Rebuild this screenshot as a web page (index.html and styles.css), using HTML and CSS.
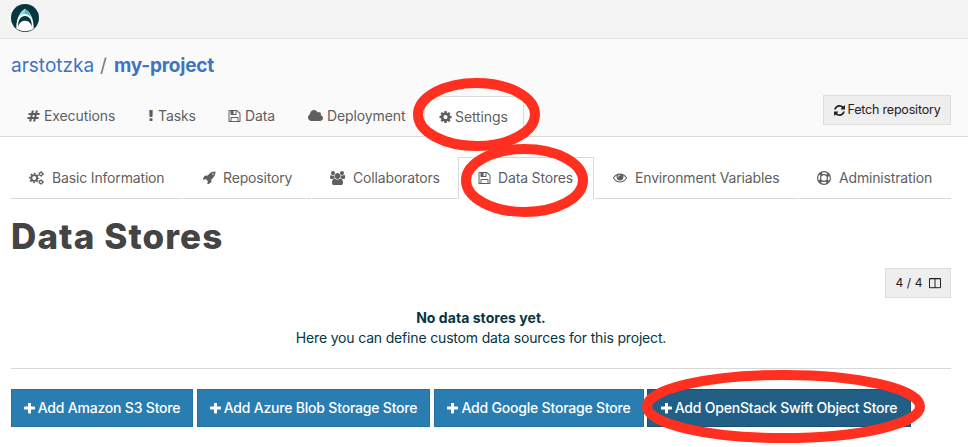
FILE: index.html
```html
<!DOCTYPE html>
<html lang="en">
<head>
<meta charset="utf-8">
<title>Data Stores</title>
<link rel="stylesheet" href="styles.css">
</head>
<body>
<svg class="sprite" aria-hidden="true">
  <symbol id="hash" viewBox="0 0 1792 1792"><path d="M991 1024l64-256h-254l-64 256h254zm768-504l-56 224q-7 24-31 24h-327l-64 256h311q15 0 25 12 10 14 6 28l-56 224q-5 24-31 24h-327l-81 328q-7 24-31 24h-224q-16 0-26-12-9-12-6-28l78-312h-254l-81 328q-7 24-31 24h-225q-15 0-25-12-9-12-6-28l78-312h-311q-15 0-25-12-9-12-6-28l56-224q7-24 31-24h327l64-256h-311q-15 0-25-12-10-14-6-28l56-224q5-24 31-24h327l81-328q7-24 32-24h224q15 0 25 12 9 12 6 28l-78 312h254l81-328q7-24 32-24h224q15 0 25 12 9 12 6 28l-78 312h311q15 0 25 12 9 12 6 28z"/></symbol>
  <symbol id="bang" viewBox="0 0 640 1792"><path d="M448 1248v224q0 26-19 45t-45 19h-256q-26 0-45-19t-19-45v-224q0-26 19-45t45-19h256q26 0 45 19t19 45zm30-1056l-28 768q-1 26-20.500 45t-45.500 19h-256q-26 0-45.500-19t-20.500-45l-28-768q-1-26 17.500-45t44.500-19h320q26 0 44.500 19t17.500 45z"/></symbol>
  <symbol id="floppy" viewBox="128 0 1536 1792"><path d="M512 1536h768v-384h-768v384zm896 0h128v-896q0-14-10-38.500t-20-34.500l-281-281q-10-10-34-20t-39-10v416q0 40-28 68t-68 28h-576q-40 0-68-28t-28-68v-416h-128v1280h128v-416q0-40 28-68t68-28h832q40 0 68 28t28 68v416zm-384-928v-320q0-13-9.500-22.500t-22.500-9.500h-192q-13 0-22.500 9.500t-9.500 22.500v320q0 13 9.500 22.500t22.500 9.500h192q13 0 22.500-9.500t9.500-22.500zm640 32v928q0 40-28 68t-68 28h-1344q-40 0-68-28t-28-68v-1344q0-40 28-68t68-28h928q40 0 88 20t76 48l280 280q28 28 48 76t20 88z"/></symbol>
  <symbol id="cloud" viewBox="64 0 1920 1792"><path d="M1984 1152q0 159-112.500 271.500t-271.500 112.500h-1088q-185 0-316.500-131.500t-131.500-316.500q0-132 71-241.500t187-163.500q-2-28-2-43 0-212 150-362t362-150q158 0 286.500 88t187.500 230q70-62 166-62 106 0 181 75t75 181q0 75-41 138 129 30 213 134.500t84 239.500z"/></symbol>
  <symbol id="cog" viewBox="128 0 1536 1792"><path d="M1152 896q0-106-75-181t-181-75-181 75-75 181 75 181 181 75 181-75 75-181zm512-109v222q0 12-8 23t-20 13l-185 28q-19 54-39 91 35 50 107 138 10 12 10 25t-9 23q-27 37-99 108t-94 71q-12 0-26-9l-138-108q-44 23-91 38-16 136-29 186-7 28-36 28h-222q-14 0-24.500-8.500t-11.500-21.500l-28-184q-49-16-90-37l-141 107q-10 9-25 9-14 0-25-11-126-114-165-168-7-10-7-23 0-12 8-23 15-21 51-66.500t54-70.500q-27-50-41-99l-183-27q-13-2-21-12.500t-8-23.500v-222q0-12 8-23t19-13l186-28q14-46 39-92-40-57-107-138-10-12-10-24 0-10 9-23 26-36 98.500-107.500t94.500-71.500q13 0 26 10l138 107q44-23 91-38 16-136 29-186 7-28 36-28h222q14 0 24.500 8.500t11.500 21.500l28 184q49 16 90 37l142-107q9-9 24-9 13 0 25 10 129 119 165 170 7 8 7 22 0 12-8 23-15 21-51 66.500t-54 70.500q26 50 41 98l183 28q13 2 21 12.500t8 23.500z"/></symbol>
  <symbol id="cogs" viewBox="0 0 15 14"><g fill="none" stroke="currentColor"><circle cx="5.200" cy="7" r="2.900" stroke-width="1.900"/><circle cx="5.200" cy="7" r="4.400" stroke-width="1.500" stroke-dasharray="1.730 1.726" stroke-dashoffset=".86"/><circle cx="12" cy="3" r="1.550" stroke-width="1.200"/><circle cx="12" cy="3" r="2.350" stroke-width=".9" stroke-dasharray="1.200 1.260"/><circle cx="12" cy="11" r="1.550" stroke-width="1.200"/><circle cx="12" cy="11" r="2.350" stroke-width=".9" stroke-dasharray="1.200 1.260"/></g></symbol>
  <symbol id="rocket" viewBox="64 64 1664 1792"><path d="M1440 448q0-40-28-68t-68-28-68 28-28 68 28 68 68 28 68-28 28-68zm224-288q0 249-75.500 430.500t-253.500 360.500q-81 80-195 176l-20 379q-2 16-16 26l-384 224q-7 4-16 4-12 0-23-9l-64-64q-13-14-8-32l85-276-281-281-276 85q-3 1-9 1-14 0-23-9l-64-64q-17-19-5-39l224-384q10-14 26-16l379-20q96-114 176-195 188-187 358-258t431-71q14 0 24 9.500t10 22.500z"/></symbol>
  <symbol id="users" viewBox="64 0 1920 1792"><path d="M657 896q-162 5-265 128h-134q-82 0-138-40.500t-56-118.500q0-353 124-353 6 0 43.500 21t97.500 42.500 119 21.500q67 0 133-23-5 37-5 66 0 159 93 293zm1071 637q0 120-73 189.500t-194 69.500h-874q-121 0-194-69.500t-73-189.500q0-53 3.500-103.500t14-109 26.500-108.500 43-97.500 62-81 85.500-53.500 111.500-20q10 0 43 21.500t73 48 107 48 135 21.500 135-21.500 107-48 73-48 43-21.500q61 0 111.500 20t85.500 53.500 62 81 43 97.500 26.500 108.500 14 109 3.500 103.500zm-1024-1277q0 106-75 181t-181 75-181-75-75-181 75-181 181-75 181 75 75 181zm704 384q0 159-112.500 271.500t-271.500 112.500-271.500-112.500-112.500-271.500 112.500-271.500 271.500-112.500 271.500 112.500 112.500 271.500zm576 225q0 78-56 118.500t-138 40.500h-134q-103-123-265-128 93-134 93-293 0-29-5-66 66 23 133 23 59 0 119-21.500t97.500-42.500 43.500-21q124 0 124 353zm-128-609q0 106-75 181t-181 75-181-75-75-181 75-181 181-75 181 75 75 181z"/></symbol>
  <symbol id="eye" viewBox="0 64 1792 1792"><path d="M1664 960q-152-236-381-353 61 104 61 225 0 185-131.500 316.500t-316.500 131.500-316.500-131.500-131.500-316.500q0-121 61-225-229 117-381 353 133 205 333.500 326.500t434.500 121.500 434.500-121.500 333.500-326.500zm-720-384q0-20-14-34t-34-14q-125 0-214.500 89.500t-89.500 214.500q0 20 14 34t34 14 34-14 14-34q0-86 61-147t147-61q20 0 34-14t14-34zm848 384q0 34-20 69-140 230-376.500 368.500t-499.500 138.500-499.500-139-376.500-368q-20-35-20-69t20-69q140-229 376.500-368t499.500-139 499.500 139 376.500 368q20 35 20 69z"/></symbol>
  <symbol id="ring" viewBox="0 0 14 14"><g fill="none" stroke="currentColor"><circle cx="7" cy="7" r="6.400" stroke-width="1.200"/><circle cx="7" cy="7" r="3.400" stroke-width="1.200"/><circle cx="7" cy="7" r="4.900" stroke-width="3" stroke-dasharray="2.800 4.897" stroke-dashoffset="-2.449"/></g></symbol>
  <symbol id="refresh" viewBox="128 0 1536 1792"><path d="M1639 1056q0 5-1 7-64 268-268 434.500t-478 166.500q-146 0-282.500-55t-243.500-157l-129 129q-19 19-45 19t-45-19-19-45v-448q0-26 19-45t45-19h448q26 0 45 19t19 45-19 45l-137 137q71 66 161 102t187 36q134 0 250-65t186-179q11-17 53-117 8-23 30-23h192q13 0 22.500 9.500t9.500 22.500zm25-800v448q0 26-19 45t-45 19h-448q-26 0-45-19t-19-45 19-45l138-138q-148-137-349-137-134 0-250 65t-186 179q-11 17-53 117-8 23-30 23h-199q-13 0-22.500-9.500t-9.500-22.500v-7q65-268 270-434.500t480-166.500q146 0 284 55.500t245 156.500l130-129q19-19 45-19t45 19 19 45z"/></symbol>
  <symbol id="columns" viewBox="0 0 12 12"><path d="M.5 1.500h11v9.200H.5zM6 1.500v9.200M.5 1.800h11" fill="none" stroke="currentColor"/></symbol>
  <symbol id="plus" viewBox="192 192 1408 1408"><path d="M1600 736v192q0 40-28 68t-68 28h-416v416q0 40-28 68t-68 28h-192q-40 0-68-28t-28-68v-416h-416q-40 0-68-28t-28-68v-192q0-40 28-68t68-28h416v-416q0-40 28-68t68-28h192q40 0 68 28t28 68v416h416q40 0 68 28t28 68z"/></symbol>
</svg>

<header class="topbar">
  <svg class="logo" viewBox="0 0 28 28"><circle cx="14" cy="14" r="14" fill="#06363f"/><path d="M5.300 24.500C5.200 15 8.500 8.200 14 4.800c5.500 3.400 8.800 10.200 8.700 19.700-5 3.600-12.400 3.600-17.400 0z" fill="#fff"/><path d="M7.400 14.500C8.800 10 11 6.800 14 4.800V10c-3 0-5.200 1.500-6.600 4.500z" fill="#8fd8dd"/><path d="M20.600 14.500C19.200 10 17 6.800 14 4.800V10c3 0 5.200 1.500 6.600 4.500z" fill="#55b5c0"/><path d="M7.200 22.500c-.5-6.500 2.500-10.600 6.800-10.600s7.300 4.100 6.800 10.600c-1-3.800-3.500-5.800-6.800-5.800s-5.800 2-6.800 5.800z" fill="#06363f"/></svg>
</header>

<section class="project">
  <div class="crumbs"><a class="owner">arstotzka</a><span class="slash">/</span><a class="name">my-project</a></div>
  <div class="project-row">
    <nav class="tabs">
      <a class="tab t-exec"><svg class="icon"><use href="#hash"/></svg><span>Executions</span></a>
      <a class="tab t-tasks"><svg class="icon thin"><use href="#bang"/></svg><span>Tasks</span></a>
      <a class="tab t-data"><svg class="icon"><use href="#floppy"/></svg><span>Data</span></a>
      <a class="tab t-deploy"><svg class="icon wide"><use href="#cloud"/></svg><span>Deployment</span></a>
      <a class="tab t-settings active"><svg class="icon"><use href="#cog"/></svg><span>Settings</span></a>
    </nav>
    <button class="btn fetch"><svg class="icon"><use href="#refresh"/></svg><span>Fetch repository</span></button>
  </div>
</section>

<main>
  <nav class="subtabs">
    <a class="sub s-basic"><svg class="icon wide"><use href="#cogs"/></svg><span>Basic Information</span></a>
    <a class="sub s-repo"><svg class="icon"><use href="#rocket"/></svg><span>Repository</span></a>
    <a class="sub s-collab"><svg class="icon wide"><use href="#users"/></svg><span>Collaborators</span></a>
    <a class="sub s-stores active"><svg class="icon"><use href="#floppy"/></svg><span>Data Stores</span></a>
    <a class="sub s-env"><svg class="icon"><use href="#eye"/></svg><span>Environment Variables</span></a>
    <a class="sub s-admin"><svg class="icon"><use href="#ring"/></svg><span>Administration</span></a>
  </nav>
  <h1><span>Data Stores</span></h1>
  <div class="tools"><button class="btn count"><span>4 / 4</span><svg class="icon"><use href="#columns"/></svg></button></div>
  <div class="empty"><strong>No data stores yet.</strong><p>Here you can define custom data sources for this project.</p></div>
  <div class="actions">
    <button class="add a-s3"><svg class="icon"><use href="#plus"/></svg><span>Add Amazon S3 Store</span></button>
    <button class="add a-azure"><svg class="icon"><use href="#plus"/></svg><span>Add Azure Blob Storage Store</span></button>
    <button class="add a-google"><svg class="icon"><use href="#plus"/></svg><span>Add Google Storage Store</span></button>
    <button class="add a-swift"><svg class="icon"><use href="#plus"/></svg><span>Add OpenStack Swift Object Store</span></button>
  </div>
</main>
<svg class="marks" viewBox="0 0 968 447"><ellipse cx="476.500" cy="114.500" rx="58.500" ry="31.500"/><ellipse cx="524.500" cy="180.500" rx="58.500" ry="31.500"/><ellipse cx="783.500" cy="406.500" rx="136.500" ry="31.500"/></svg>
</body>
</html>
```
FILE: styles.css
```css
* { box-sizing: border-box; }
body { margin: 0; height: 447px; overflow: hidden; background: #fff; color: #06363f; font: 14px/20px Inter, "Liberation Sans", sans-serif; position: relative; white-space: nowrap; }
button { font: inherit; margin: 0; white-space: nowrap; }
.sprite { position: absolute; width: 0; height: 0; }
.icon { width: 13px; height: 14px; flex: none; fill: currentColor; }
.icon.wide { width: 15px; }
.icon.thin { width: 5px; }
.topbar { height: 39px; background: #f4f4f4; border-bottom: 1px solid #e3e3e3; padding: 4px 11px; }
.logo { display: block; width: 28px; height: 28px; }
.project { height: 98px; background: #fafafa; border-bottom: 1px solid #dcdcdc; padding: 15px 17px 0 11px; }
.crumbs { height: 24px; line-height: 24px; font-size: 19px; color: #3e74c0; display: flex; }
.slash { color: #777; margin: 0 7px 0 6px; }
.name { font-weight: 700; letter-spacing: -.2px; }
.project-row { display: flex; justify-content: space-between; margin-top: 18px; }
.tabs { display: flex; height: 41px; letter-spacing: -.1px; }
.tab { display: flex; align-items: center; gap: 4px; padding-bottom: 2px; color: #5f5f5f; }
.t-exec { width: 121px; padding-left: 16px; }
.t-tasks { width: 80px; padding-left: 17px; }
.t-data { width: 80px; padding-left: 16px; }
.t-deploy { width: 132px; padding-left: 16px; }
.tab.active { width: 100px; padding: 0 0 0 14px; gap: 3px; border: 1px solid #dcdcdc; border-bottom: 0; background: #fff; }
.btn { display: flex; align-items: center; justify-content: center; height: 30px; padding: 0; border: 1px solid #ddd; background: #eee; color: #222; font-size: 13px; }
.fetch { width: 128px; margin-top: -1px; gap: 3px; font-size: 12.5px; letter-spacing: -.2px; }
.fetch .icon { width: 11px; height: 13px; }
main { padding: 20px 17px 0 11px; }
.subtabs { display: flex; height: 42px; gap: 1px; letter-spacing: -.16px; }
.sub { display: flex; align-items: center; gap: 8px; color: #5f5f5f; border-bottom: 1px solid #d8d8d8; }
.s-basic { width: 171px; padding-left: 18px; }
.s-repo { width: 128px; padding-left: 20px; gap: 7px; }
.s-collab { width: 145px; padding-left: 18px; }
.sub.active { width: 136px; padding: 0 0 1px 19px; gap: 7px; border: 1px solid #d8d8d8; border-bottom: 0; }
.s-env { width: 203px; padding-left: 18px; }
.s-admin { width: 152px; padding-left: 18px; }
.s-env .icon, .s-admin .icon { width: 14px; }
h1 { margin: 17px 0 0; height: 40px; line-height: 40px; font-size: 35px; font-weight: 800; letter-spacing: 1.1px; color: #444; }
.tools { display: flex; justify-content: flex-end; margin-top: 12px; }
.count { width: 66px; gap: 6px; font-size: 12px; letter-spacing: .1px; }
.count .icon { width: 12px; height: 12px; }
.empty { text-align: center; height: 71px; padding-top: 10px; border-bottom: 1px solid #d8d8d8; }
.empty strong { display: block; font-weight: 700; letter-spacing: .05px; }
.empty p { margin: 0; letter-spacing: -.17px; }
.actions { display: flex; margin-top: 20px; gap: 4px; }
.add { display: flex; align-items: center; justify-content: center; gap: 3px; height: 38px; padding: 0; border: 1px solid #236f9f; background: #2a7db1; color: #fff; font-weight: 500; letter-spacing: -.2px; }
.add .icon { width: 11px; height: 11px; }
.a-s3 { width: 182px; }
.a-azure { width: 233px; }
.a-google { width: 210px; }
.a-swift { width: 264px; background: #225f87; border-color: #1b4f71; margin-left: -1px; }
.marks { position: absolute; inset: 0; width: 968px; height: 447px; fill: none; stroke: #ff301f; stroke-width: 10; }
```
